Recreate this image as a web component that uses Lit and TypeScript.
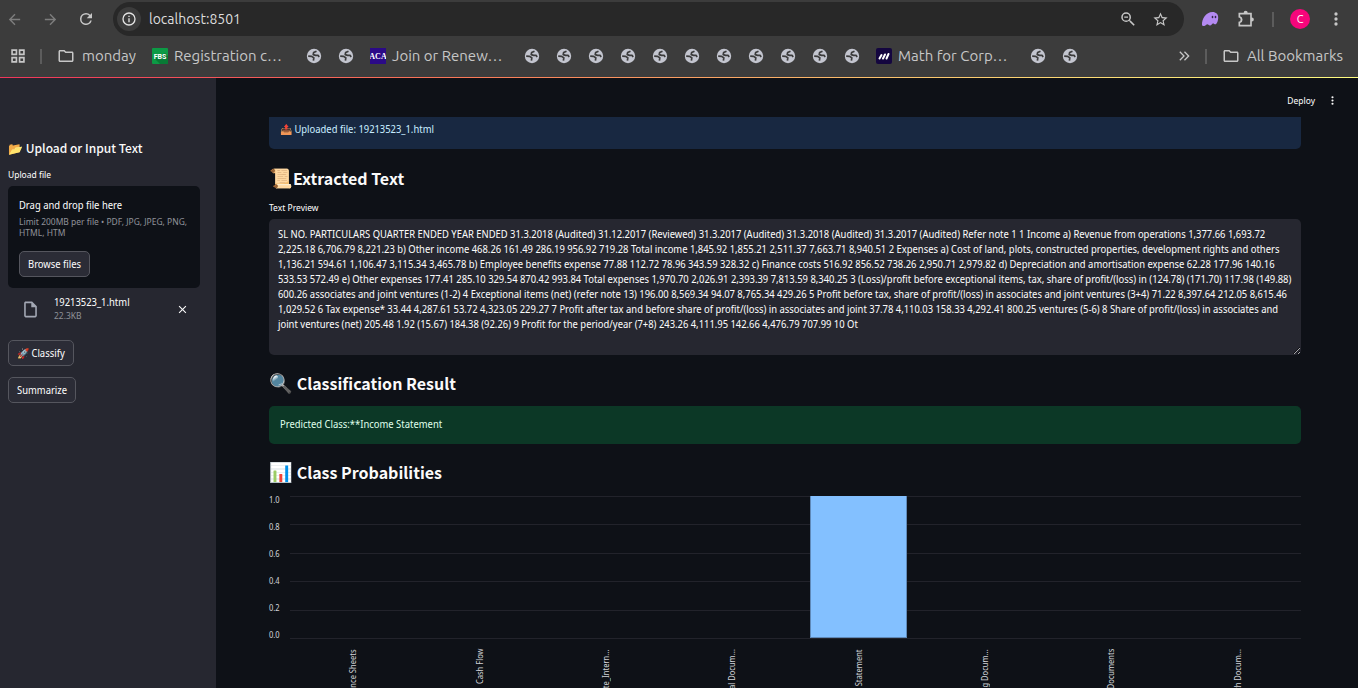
import { LitElement, html, css, nothing } from "lit";
import { customElement, property } from "lit/decorators.js";

const PREVIEW = [
  "SL NO. PARTICULARS QUARTER ENDED YEAR ENDED 31.3.2018 (Audited) 31.12.2017 (Reviewed) 31.3.2017 (Audited) 31.3.2018 (Audited) 31.3.2017 (Audited) Refer note 1 1 Income a) Revenue from operations 1,377.66 1,693.72",
  "2,225.18 6,706.79 8,221.23 b) Other income 468.26 161.49 286.19 956.92 719.28 Total income 1,845.92 1,855.21 2,511.37 7,663.71 8,940.51 2 Expenses a) Cost of land, plots, constructed properties, development rights and others",
  "1,136.21 594.61 1,106.47 3,115.34 3,465.78 b) Employee benefits expense 77.88 112.72 78.96 343.59 328.32 c) Finance costs 516.92 856.52 738.26 2,950.71 2,979.82 d) Depreciation and amortisation expense 62.28 177.96 140.16",
  "533.53 572.49 e) Other expenses 177.41 285.10 329.54 870.42 993.84 Total expenses 1,970.70 2,026.91 2,393.39 7,813.59 8,340.25 3 (Loss)/profit before exceptional items, tax, share of profit/(loss) in (124.78) (171.70) 117.98 (149.88)",
  "600.26 associates and joint ventures (1-2) 4 Exceptional items (net) (refer note 13) 196.00 8,569.34 94.07 8,765.34 429.26 5 Profit before tax, share of profit/(loss) in associates and joint ventures (3+4) 71.22 8,397.64 212.05 8,615.46",
  "1,029.52 6 Tax expense* 33.44 4,287.61 53.72 4,323.05 229.27 7 Profit after tax and before share of profit/(loss) in associates and joint 37.78 4,110.03 158.33 4,292.41 800.25 ventures (5-6) 8 Share of profit/(loss) in associates and",
  "joint ventures (net) 205.48 1.92 (15.67) 184.38 (92.26) 9 Profit for the period/year (7+8) 243.26 4,111.95 142.66 4,476.79 707.99 10 Ot",
].join("\n");

const ICONS: Record<string, string> = {
  back: "M20 11H7.83l5.59-5.59L12 4l-8 8 8 8 1.41-1.41L7.83 13H20v-2z",
  forward: "M12 4l-1.41 1.41L16.17 11H4v2h12.17l-5.58 5.59L12 20l8-8z",
  reload:
    "M17.65 6.35A7.96 7.96 0 0 0 12 4a8 8 0 1 0 7.73 10h-2.08A6 6 0 1 1 12 6c1.66 0 3.14.69 4.22 1.78L13 11h7V4l-2.35 2.35z",
  info: "M11 7h2v2h-2zm0 4h2v6h-2zm1-9a10 10 0 1 0 0 20 10 10 0 0 0 0-20zm0 18a8 8 0 1 1 0-16 8 8 0 0 1 0 16z",
  zoomOut:
    "M15.5 14h-.79l-.28-.27A6.47 6.47 0 0 0 16 9.5 6.5 6.5 0 1 0 9.5 16c1.61 0 3.09-.59 4.23-1.57l.27.28v.79l5.5 5.49L21 19.5 15.5 14zm-6 0a4.5 4.5 0 1 1 0-9 4.5 4.5 0 0 1 0 9zM7 8.7h5v1.6H7z",
  star: "M22 9.24l-7.19-.62L12 2 9.19 8.63 2 9.24l5.46 4.73L5.82 21 12 17.27 18.18 21l-1.63-7.03L22 9.24zM12 15.4l-3.76 2.27 1-4.28-3.32-2.88 4.38-.38L12 6.1l1.71 4.04 4.38.38-3.32 2.88 1 4.28L12 15.4z",
  folder:
    "M9.17 6l2 2H20v10H4V6h5.170M10 4H4c-1.100 0-2 .9-2 2v12c0 1.100.9 2 2 2h16c1.100 0 2-.9 2-2V8c0-1.100-.9-2-2-2h-8l-2-2z",
  apps: "M3 3h8v8H3zM5.200 5.200v3.600h3.600V5.200zM13 3h8v8h-8zM15.200 5.200v3.600h3.600V5.200zM3 13h8v8H3zM5.200 15.200v3.600h3.600v-3.600zM13 13h8v8h-8zM15.200 15.200v3.600h3.600v-3.600z",
  puzzle:
    "M3 4.500h6.200a2.400 2.400 0 0 1 4.800 0H19v5.700a2.400 2.400 0 0 1 0 4.800v6H3v-5.700a2.400 2.400 0 0 0 0-5.100zM5 6.500v2.200a4.300 4.300 0 0 1 0 8.100V19h12V6.500z",
  more: "M12 8a2 2 0 1 0 0-4 2 2 0 0 0 0 4zm0 2a2 2 0 1 0 0 4 2 2 0 0 0 0-4zm0 6a2 2 0 1 0 0 4 2 2 0 0 0 0-4z",
  chevrons: "M6.400 5L5 6.400l5.600 5.600L5 17.600 6.400 19l7-7zM13.400 5L12 6.400l5.600 5.600-5.600 5.600 1.400 1.400 7-7z",
  file: "M6 2c-1.100 0-2 .9-2 2v16c0 1.100.9 2 2 2h12c1.100 0 2-.9 2-2V8l-6-6H6zm0 2h7v5h5v11H6z",
  close: "M19 6.410L17.590 5 12 10.590 6.410 5 5 6.410 10.590 12 5 17.590 6.410 19 12 13.410 17.590 19 19 17.590 13.410 12z",
};

const icon = (name: string, size: number) =>
  html`<svg class="icon" width=${size} height=${size} viewBox="0 0 24 24" aria-hidden="true">
    <path fill="currentColor" fill-rule="evenodd" d=${ICONS[name]}></path>
  </svg>`;

const globeIcon = () =>
  html`<svg class="icon" width="16" height="16" viewBox="0 0 16 16" aria-hidden="true">
    <circle cx="8" cy="8" r="7.200" fill="#c3c5cf"></circle>
    <path
      d="M10.500 3.200L7.600 4.600 7.200 6.600 9.600 7.400 12 7.300 13.200 9M2.200 8.200L5.600 8.400 7.800 9.800 7.400 12.600"
      fill="none"
      stroke="#3c3c3c"
      stroke-width="1.700"
      stroke-linejoin="round"
    ></path>
  </svg>`;

const iconStyles = css`
  * { box-sizing: border-box; }
  .icon { display: block; flex: none; }
  button { font: inherit; color: inherit; cursor: pointer; }
  a { color: inherit; text-decoration: none; }
`;

@customElement("browser-bar")
export class BrowserBar extends LitElement {
  static styles = [
    iconStyles,
    css`
      :host {
        display: block;
        background: #3c3c3c;
        color: #c7c7c7;
        font: 15px/20px Ubuntu, "Noto Sans", sans-serif;
      }
      .toolbar { display: flex; align-items: center; height: 38px; padding-right: 4px; }
      .tool {
        display: grid;
        place-items: center;
        width: 36px;
        height: 34px;
        padding: 0;
        border: 0;
        background: none;
      }
      .tool.first { width: 32px; padding-right: 4px; }
      .tool.small { width: 32px; }
      .dim { color: #7d7d7d; }
      .omnibox {
        display: flex;
        align-items: center;
        flex: 1;
        height: 34px;
        margin: 0 8px 0 9px;
        padding: 0 8px 0 4px;
        border-radius: 17px;
        background: #282828;
      }
      .site {
        display: grid;
        place-items: center;
        width: 24px;
        height: 24px;
        padding: 0;
        border: 0;
        border-radius: 50%;
        background: #3c3c3c;
        color: #e3e3e3;
      }
      .url {
        flex: 1;
        min-width: 0;
        padding: 0 0 0 8px;
        border: 0;
        outline: 0;
        background: none;
        color: #dedede;
        font: inherit;
        font-size: 14px;
      }
      .rule { width: 2px; height: 15px; background: #5c5c5c; }
      .toolbar .rule { margin: 0 16px 0 8px; }
      .avatar {
        width: 20px;
        height: 20px;
        padding: 0;
        border: 0;
        border-radius: 50%;
        background: #f6067b;
        color: #fff;
        font-size: 11px;
        line-height: 20px;
      }
      .menu { margin-left: 8px; }
      .bookmarks { display: flex; align-items: center; height: 39px; padding: 0 15px 3px 9px; }
      .bookmarks .rule { margin: 0 15px 0 13px; }
      .mark { display: flex; align-items: center; gap: 6px; width: 154px; white-space: nowrap; }
      .mark.folder { gap: 7px; width: auto; }
      .mark.monday { width: 95px; }
      .globes { display: flex; gap: 16px; margin-right: 16px; }
      .end { display: flex; align-items: center; margin-left: auto; }
      .more { display: grid; place-items: center; padding: 0; border: 0; background: none; }
    `,
  ];

  private globes(count: number) {
    return html`<div class="globes">
      ${Array.from({ length: count }, () => html`<a href="#" aria-label="Bookmark">${globeIcon()}</a>`)}
    </div>`;
  }

  render() {
    return html`
      <div class="toolbar">
        <button class="tool first dim" aria-label="Back" disabled>${icon("back", 17)}</button>
        <button class="tool dim" aria-label="Forward" disabled>${icon("forward", 17)}</button>
        <button class="tool" aria-label="Reload">${icon("reload", 18)}</button>
        <div class="omnibox">
          <button class="site" aria-label="Site information">${icon("info", 16)}</button>
          <input class="url" aria-label="Address" .value=${"localhost:8501"} />
          <button class="tool small" aria-label="Zoom">${icon("zoomOut", 18)}</button>
          <button class="tool small" aria-label="Bookmark this tab">${icon("star", 17)}</button>
        </div>
        <button class="tool" aria-label="Ghost extension">
          <svg class="icon" width="18" height="16" viewBox="0 0 18 16">
            <path
              fill="#b48af2"
              d="M1 14C.6 8 5 1 11.500 1c3.600 0 5.700 2.300 5.700 5.500 0 3.400-1.500 6.800-2.800 6.800-1 0-1.400-.8-2.400-.8s-1.400 2-3 2-1.600-1.200-2.600-1.200S4.600 15 3 15c-1 0-1.900-.2-2-1z"
            ></path>
            <ellipse cx="11.500" cy="6" rx=".8" ry="1.200" fill="#33284a"></ellipse>
            <ellipse cx="14.500" cy="6" rx=".8" ry="1.200" fill="#33284a"></ellipse>
          </svg>
        </button>
        <button class="tool" aria-label="Extensions">${icon("puzzle", 20)}</button>
        <span class="rule"></span>
        <button class="avatar" aria-label="Profile">C</button>
        <button class="tool menu" aria-label="Menu">${icon("more", 20)}</button>
      </div>
      <nav class="bookmarks">
        <button class="more" aria-label="Apps">${icon("apps", 18)}</button>
        <span class="rule"></span>
        <a class="mark folder monday" href="#">${icon("folder", 18)}monday</a>
        <a class="mark" href="#">
          <svg class="icon" width="16" height="16" viewBox="0 0 16 16">
            <rect width="16" height="16" rx="1" fill="#0c9a45"></rect>
            <path d="M3 11l5 5h8V8l-3-3z" fill="#087a35"></path>
            <text x="8" y="11" text-anchor="middle" font-family="Roboto" font-weight="700" font-size="7" fill="#fff">FBS</text>
          </svg>
          Registration c…
        </a>
        ${this.globes(2)}
        <a class="mark" href="#">
          <svg class="icon" width="16" height="16" viewBox="0 0 16 16">
            <rect width="16" height="16" fill="#2b0a87"></rect>
            <text x="8" y="11" text-anchor="middle" font-family="Liberation Serif" font-weight="700" font-size="8" fill="#fff">ACA</text>
          </svg>
          Join or Renew…
        </a>
        ${this.globes(11)}
        <a class="mark" href="#">
          <svg class="icon" width="16" height="16" viewBox="0 0 16 16">
            <rect width="16" height="16" rx="2" fill="#14063f"></rect>
            <path d="M3.500 10.500L5.500 7M7 10.500L9 6.500M10.500 10.500L12.500 6" stroke="#fff" stroke-width="2" stroke-linecap="round"></path>
          </svg>
          Math for Corp…
        </a>
        ${this.globes(2)}
        <div class="end">
          <button class="more" aria-label="More bookmarks">${icon("chevrons", 16)}</button>
          <span class="rule"></span>
          <a class="mark folder" href="#">${icon("folder", 18)}All Bookmarks</a>
        </div>
      </nav>
    `;
  }
}

@customElement("upload-sidebar")
export class UploadSidebar extends LitElement {
  static styles = [
    iconStyles,
    css`
      :host {
        display: block;
        width: 216px;
        flex: none;
        padding: 60px 16px 0 8px;
        background: #262730;
      }
      h2 {
        margin: 0;
        font: 500 12px/20px "Noto Sans CJK SC", "Noto Sans", sans-serif;
        white-space: nowrap;
      }
      .label { display: block; margin: 10px 0 4px; font-size: 9px; line-height: 14px; }
      .drop { padding: 12px 11px 11px; border-radius: 5px; background: #0e1117; }
      .title { line-height: 15px; }
      .hint { margin: 3px 0 13px; color: #8d8f96; font-size: 9px; line-height: 11px; }
      .btn {
        display: block;
        height: 26px;
        padding: 0 8px;
        border: 1px solid #55565e;
        border-radius: 5px;
        background: #2b2c36;
        line-height: 14px;
        white-space: nowrap;
      }
      .picker { display: none; }
      .file { display: flex; align-items: center; margin: 7px 11px 0; padding-left: 2px; }
      .sheet { color: #a3a8b4; }
      .meta { flex: 1; padding-left: 14px; line-height: 14px; }
      .size { color: #8d8f96; font-size: 9px; }
      .remove { display: grid; place-items: center; padding: 0; border: 0; background: none; }
      .actions { display: grid; justify-items: start; gap: 11px; margin-top: 17px; }
    `,
  ];

  render() {
    return html`
      <h2>📂 Upload or Input Text</h2>
      <label class="label" for="file">Upload file</label>
      <div class="drop">
        <div class="title">Drag and drop file here</div>
        <div class="hint">Limit 200MB per file • PDF, JPG, JPEG, PNG, HTML, HTM</div>
        <input class="picker" id="file" type="file" />
        <button class="btn">Browse files</button>
      </div>
      <div class="file">
        <span class="sheet">${icon("file", 19)}</span>
        <div class="meta">
          <div>19213523_1.html</div>
          <div class="size">22.3KB</div>
        </div>
        <button class="remove" aria-label="Remove file">${icon("close", 13)}</button>
      </div>
      <div class="actions">
        <button class="btn">🚀 Classify</button>
        <button class="btn">Summarize</button>
      </div>
    `;
  }
}

interface Bar {
  label: string;
  value: number;
}

@customElement("bar-chart")
export class BarChart extends LitElement {
  @property({ attribute: false }) bars: Bar[] = [];

  static styles = css`
    * { box-sizing: border-box; }
    :host {
      display: grid;
      grid-template-columns: 21px 1fr;
      margin-top: 12px;
      color: #d0d1d6;
      font-size: 8px;
      line-height: 8px;
    }
    .axis { display: flex; flex-direction: column; justify-content: space-between; height: 143px; }
    .plot {
      display: grid;
      grid-auto-flow: column;
      grid-auto-columns: 1fr;
      height: 143px;
      border-bottom: 1px solid #22232b;
      background: repeating-linear-gradient(to bottom, #22232b 0 1px, transparent 1px 20%);
    }
    .band { display: flex; align-items: flex-end; justify-content: center; }
    .bar { width: 77%; background: #83c0ff; border: solid #5f89b8; border-width: 0 1px 1px; }
    .names { grid-column: 2; display: grid; grid-auto-flow: column; grid-auto-columns: 1fr; padding-top: 10px; }
    .name {
      justify-self: center;
      height: 80px;
      writing-mode: vertical-rl;
      transform: rotate(180deg);
      text-align: right;
      white-space: nowrap;
    }
  `;

  render() {
    return html`
      <div class="axis">${["1.0", "0.8", "0.6", "0.4", "0.2", "0.0"].map((t) => html`<span>${t}</span>`)}</div>
      <div class="plot">
        ${this.bars.map(
          (b) => html`<div class="band">
            ${b.value > 0 ? html`<div class="bar" style="height:${b.value * 100}%"></div>` : nothing}
          </div>`,
        )}
      </div>
      <div class="names">${this.bars.map((b) => html`<span class="name">${b.label}</span>`)}</div>
    `;
  }
}

@customElement("app-root")
export class AppRoot extends LitElement {
  static styles = [
    iconStyles,
    css`
      :host {
        display: flex;
        flex-direction: column;
        height: 100vh;
        overflow: hidden;
        background: #0e1117;
        color: #fafafa;
        font: 10px/15px "Noto Sans Display", "Noto Sans CJK SC", sans-serif;
      }
      .decoration {
        flex: none;
        height: 1px;
        background: linear-gradient(90deg, #f0365a, #fb7a58 35%, #fbc26c 65%, #fffd80);
      }
      .shell { display: flex; flex: 1; min-height: 0; }
      main { display: flex; flex-direction: column; flex: 1; min-width: 0; }
      header {
        display: flex;
        flex: none;
        align-items: center;
        justify-content: flex-end;
        gap: 11px;
        height: 39px;
        padding: 5px 19px 0 0;
      }
      .plain { display: grid; place-items: center; padding: 0; border: 0; background: none; font-size: 9px; }
      .content { flex: 1; min-height: 0; overflow: hidden; padding: 0 57px 0 53px; }
      .info {
        height: 32px;
        margin-bottom: 17px;
        padding: 5px 11px;
        border-radius: 0 0 5px 5px;
        background: #182841;
        color: #c7ebff;
      }
      h3 {
        margin: 16px 0 11px;
        font: 600 16px/24px "Noto Sans CJK SC", "Noto Sans", sans-serif;
      }
      .emoji { font-size: 19px; line-height: 20px; }
      label { display: block; margin-bottom: 4px; font-size: 9px; line-height: 14px; }
      textarea {
        display: block;
        width: 100%;
        height: 136px;
        padding: 8px 8px 8px 9px;
        border: 0;
        border-radius: 5px;
        outline: 0;
        background: #262730;
        color: #fafafa;
        font: inherit;
        white-space: pre;
        overflow: hidden;
        resize: vertical;
      }
      .success { padding: 11px 11px 12px; border-radius: 5px; background: #0c3826; color: #dffde9; }
    `,
  ];

  private bars: Bar[] = [
    { label: "Balance Sheets", value: 0 },
    { label: "Cash Flow", value: 0 },
    { label: "Corporate_Intern…", value: 0 },
    { label: "Financial Docum…", value: 0 },
    { label: "Income Statement", value: 1 },
    { label: "Banking Docum…", value: 0 },
    { label: "Other Documents", value: 0 },
    { label: "Research Docum…", value: 0 },
  ];

  render() {
    return html`
      <browser-bar></browser-bar>
      <div class="decoration"></div>
      <div class="shell">
        <upload-sidebar></upload-sidebar>
        <main>
          <header>
            <button class="plain">Deploy</button>
            <button class="plain" aria-label="App menu">${icon("more", 13)}</button>
          </header>
          <div class="content">
            <div class="info">📤 Uploaded file: 19213523_1.html</div>
            <h3><span class="emoji">📜</span>Extracted Text</h3>
            <label for="preview">Text Preview</label>
            <textarea id="preview" spellcheck="false" .value=${PREVIEW}></textarea>
            <h3><span class="emoji">🔍</span> Classification Result</h3>
            <div class="success">Predicted Class:**Income Statement</div>
            <h3><span class="emoji">📊</span> Class Probabilities</h3>
            <bar-chart .bars=${this.bars}></bar-chart>
          </div>
        </main>
      </div>
    `;
  }
}
